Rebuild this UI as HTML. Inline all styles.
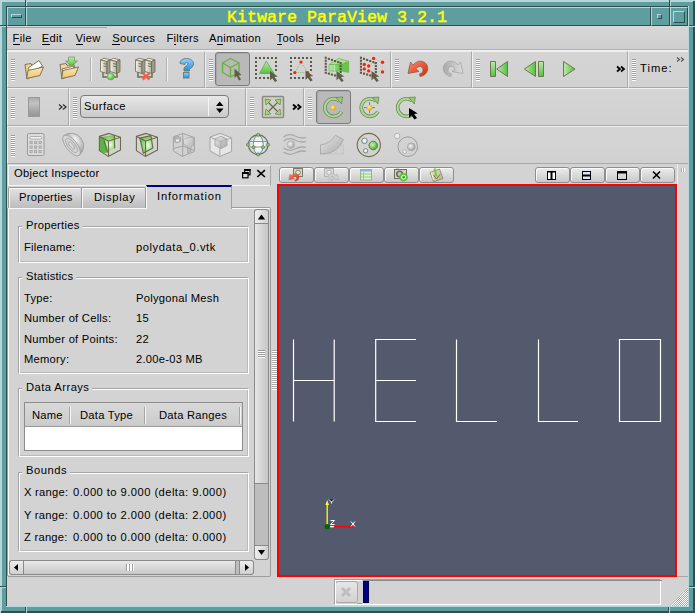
<!DOCTYPE html>
<html><head><meta charset="utf-8">
<style>
*{box-sizing:border-box}
html,body{margin:0;padding:0}
body{width:695px;height:613px;position:relative;overflow:hidden;background:#5f9ea0;font-family:"Liberation Sans",sans-serif;font-size:11.2px;letter-spacing:0.25px;color:#000}
.a{position:absolute}
.t{position:absolute;white-space:pre;line-height:1}
.lt{background:#b7d6d7}
.dk{background:#2f4f4f}
.tl{background:#5f9ea0}
u{text-decoration:none;border-bottom:1px solid #000;}
</style></head><body>
<!-- window frame -->
<div class="a lt" style="left:0;top:0;width:695px;height:2px"></div>
<div class="a lt" style="left:0;top:0;width:2px;height:613px"></div>
<div class="a dk" style="left:693px;top:1px;width:2px;height:612px"></div>
<div class="a dk" style="left:1px;top:611px;width:694px;height:2px"></div>
<!-- inner sunken bevel -->
<div class="a dk" style="left:6px;top:6px;width:683px;height:1px"></div>
<div class="a dk" style="left:6px;top:6px;width:1px;height:601px"></div>
<div class="a lt" style="left:688px;top:6px;width:1px;height:601px"></div>
<div class="a lt" style="left:6px;top:606px;width:683px;height:1px"></div>
<!-- corner breaks -->
<div class="a dk" style="left:25px;top:0;width:1px;height:6px"></div>
<div class="a lt" style="left:26px;top:0;width:1px;height:6px"></div>
<div class="a dk" style="left:669px;top:0;width:1px;height:6px"></div>
<div class="a lt" style="left:670px;top:0;width:1px;height:6px"></div>
<div class="a dk" style="left:0;top:25px;width:6px;height:1px"></div>
<div class="a lt" style="left:0;top:26px;width:6px;height:1px"></div>
<div class="a dk" style="left:689px;top:25px;width:6px;height:1px"></div>
<div class="a lt" style="left:689px;top:26px;width:6px;height:1px"></div>
<div class="a dk" style="left:0;top:586px;width:6px;height:1px"></div>
<div class="a lt" style="left:0;top:587px;width:6px;height:1px"></div>
<div class="a dk" style="left:689px;top:586px;width:6px;height:1px"></div>
<div class="a lt" style="left:689px;top:587px;width:6px;height:1px"></div>
<div class="a dk" style="left:25px;top:607px;width:1px;height:6px"></div>
<div class="a lt" style="left:26px;top:607px;width:1px;height:6px"></div>
<div class="a dk" style="left:668px;top:607px;width:1px;height:6px"></div>
<div class="a lt" style="left:669px;top:607px;width:1px;height:6px"></div>
<!-- title bar -->
<div class="a" style="left:7px;top:7px;width:19px;height:19px;border-top:1px solid #b7d6d7;border-left:1px solid #b7d6d7;border-bottom:1px solid #2f4f4f;border-right:1px solid #2f4f4f"></div>
<div class="a" style="left:11px;top:14px;width:11px;height:4px;border-top:1px solid #b7d6d7;border-left:1px solid #b7d6d7;border-bottom:1px solid #2f4f4f;border-right:1px solid #2f4f4f"></div>
<div class="a" style="left:26px;top:7px;width:625px;height:19px;border-top:1px solid #b7d6d7;border-left:1px solid #b7d6d7;border-bottom:1px solid #2f4f4f;border-right:1px solid #2f4f4f"></div>
<div class="a" style="left:651px;top:7px;width:19px;height:19px;border-top:1px solid #b7d6d7;border-left:1px solid #b7d6d7;border-bottom:1px solid #2f4f4f;border-right:1px solid #2f4f4f"></div>
<div class="a" style="left:657px;top:14px;width:5px;height:5px;border-top:1px solid #b7d6d7;border-left:1px solid #b7d6d7;border-bottom:1px solid #2f4f4f;border-right:1px solid #2f4f4f"></div>
<div class="a" style="left:670px;top:7px;width:18px;height:19px;border-top:1px solid #b7d6d7;border-left:1px solid #b7d6d7;border-bottom:1px solid #2f4f4f;border-right:1px solid #2f4f4f"></div>
<div class="a" style="left:673px;top:11px;width:12px;height:12px;border-top:1px solid #b7d6d7;border-left:1px solid #b7d6d7;border-bottom:1px solid #2f4f4f;border-right:1px solid #2f4f4f"></div>
<div class="t" style="left:227px;top:10px;letter-spacing:0;font-family:'Liberation Mono',monospace;font-weight:normal;-webkit-text-stroke:0.45px #ffff00;font-size:16.67px;color:#ffff00">Kitware ParaView 3.2.1</div>

<!-- client area -->
<div class="a" id="client" style="left:7px;top:26px;width:681px;height:580px;background:#d3d3d3"></div>

<!-- menu bar -->
<div class="a" style="left:7px;top:26px;width:681px;height:24px;background:linear-gradient(#d8d8d8,#cdcdcd)"></div>
<div class="a" style="left:7px;top:27px;width:100px;height:1px;background:#a4a4a4"></div>
<div class="a" style="left:7px;top:49px;width:681px;height:1px;background:#b4b4b4"></div>
<div class="a" style="left:7px;top:50px;width:681px;height:1px;background:#eeeeee"></div>
<div class="t" style="left:12.6px;top:33px"><u>F</u>ile</div>
<div class="t" style="left:41.8px;top:33px"><u>E</u>dit</div>
<div class="t" style="left:75.5px;top:33px"><u>V</u>iew</div>
<div class="t" style="left:112.2px;top:33px"><u>S</u>ources</div>
<div class="t" style="left:166.5px;top:33px">F<u>i</u>lters</div>
<div class="t" style="left:209px;top:33px">A<u>n</u>imation</div>
<div class="t" style="left:276.6px;top:33px"><u>T</u>ools</div>
<div class="t" style="left:316.1px;top:33px"><u>H</u>elp</div>

<!-- toolbars -->
<style>
.tb{position:absolute;border-top:1px solid #efefef;border-left:1px solid #efefef;border-right:1px solid #a9a9a9;border-bottom:1px solid #a9a9a9;background:linear-gradient(#d5d5d5,#d1d1d1)}
.grip{position:absolute;width:4px;height:22px;background:repeating-linear-gradient(#9c9c9c 0 1px,#ffffff 1px 2px)}
.sep{position:absolute;width:2px;height:24px;border-left:1px solid #b4b4b4;border-right:1px solid #f0f0f0}
.pressed{position:absolute;border:1px solid #7c7c7c;border-radius:3px;background:#b9b9b9;box-shadow:inset 1px 1px 0 #a8a8a8}
</style>
<!-- row 1 -->
<div class="tb" style="left:7px;top:51px;width:198px;height:37px"></div>
<div class="tb" style="left:205px;top:51px;width:186px;height:37px"></div>
<div class="tb" style="left:391px;top:51px;width:81px;height:37px"></div>
<div class="tb" style="left:472px;top:51px;width:156px;height:37px"></div>
<div class="tb" style="left:628px;top:51px;width:60px;height:37px;border-right:none"></div>
<div class="grip" style="left:11px;top:59px"></div>
<div class="sep" style="left:90px;top:57px"></div>
<div class="sep" style="left:166px;top:57px"></div>
<div class="grip" style="left:209px;top:59px"></div>
<div class="pressed" style="left:215px;top:52px;width:35px;height:34px"></div>
<div class="grip" style="left:395px;top:59px"></div>
<div class="grip" style="left:476px;top:59px"></div>
<div class="grip" style="left:632px;top:59px"></div>
<div class="t" style="left:640px;top:63px;letter-spacing:1px">Time:</div>
<!-- row 2 -->
<div class="tb" style="left:7px;top:88px;width:62px;height:38px"></div>
<div class="tb" style="left:69px;top:88px;width:177px;height:38px"></div>
<div class="tb" style="left:246px;top:88px;width:58px;height:38px"></div>
<div class="tb" style="left:304px;top:88px;width:384px;height:38px;border-right:none"></div>
<div class="grip" style="left:11px;top:97px"></div>
<div class="grip" style="left:73px;top:97px"></div>
<div class="grip" style="left:250px;top:97px"></div>
<div class="grip" style="left:308px;top:97px"></div>
<div class="a" style="left:28px;top:97px;width:12px;height:20px;border:1px solid #9a9a9a;background:linear-gradient(#acacac,#c2c2c2 30%,#a6a6a6 70%,#979797)"></div>
<div class="a" style="left:80px;top:95px;width:149px;height:23px;border:1px solid #7a7a7a;border-radius:4px;background:linear-gradient(#e8e8e8,#cacaca)"></div>
<div class="a" style="left:208px;top:97px;width:1px;height:19px;background:#f4f4f4"></div>
<div class="t" style="left:84px;top:101px;letter-spacing:0.5px">Surface</div>
<div class="pressed" style="left:316px;top:90px;width:35px;height:34px"></div>
<!-- row 3 -->
<div class="tb" style="left:7px;top:126px;width:681px;height:38px;border-right:none"></div>
<div class="grip" style="left:11px;top:135px"></div>

<!-- object inspector dock -->
<div class="a" style="left:8px;top:165px;width:263px;height:21px;border-top:1px solid #f4f4f4;border-left:1px solid #f4f4f4;border-right:1px solid #a4a4a4;border-bottom:1px solid #f4f4f4;background:#d5d5d5"></div>
<div class="t" style="left:14px;top:168px">Object Inspector</div>
<!-- tabs -->
<style>
.tab{position:absolute;top:187px;height:21px;border:1px solid #9a9a9a;border-bottom:none;border-radius:2px 2px 0 0;background:linear-gradient(#e2e2e2,#bdbdbd);box-shadow:inset 1px 1px 0 #f6f6f6}
</style>
<div class="a" style="left:7px;top:207px;width:264px;height:370px;border:1px solid #9c9c9c;border-radius:2px"></div>
<div class="a" style="left:8px;top:208px;width:262px;height:1px;background:#f8f8f8"></div>
<div class="a" style="left:8px;top:208px;width:1px;height:367px;background:#f8f8f8"></div>
<div class="tab" style="left:8px;width:74px"></div>
<div class="tab" style="left:81px;width:65px"></div>
<div class="a" style="left:146px;top:185px;width:86px;height:24px;border-left:1px solid #f8f8f8;border-right:1px solid #a0a0a0;background:#d3d3d3;border-top:2px solid #000080"></div>
<div class="t" style="left:19px;top:192px">Properties</div>
<div class="t" style="left:94px;top:192px;letter-spacing:0.7px">Display</div>
<div class="t" style="left:157px;top:191px;letter-spacing:0.8px">Information</div>
<!-- inner scroll area frame -->


<style>
.gb{position:absolute;border-top:1px solid #a4a4a4;border-left:1px solid #a4a4a4;border-right:1px solid #ffffff;border-bottom:1px solid #ffffff;box-shadow:inset 1px 1px 0 #ffffff,inset -1px -1px 0 #bababa}
.gt{position:absolute;white-space:pre;line-height:1;background:#d3d3d3;padding:0 3px 0 4px}
</style>
<!-- group boxes -->
<div class="gb" style="left:18px;top:226px;width:231px;height:37px"></div>
<div class="gt" style="left:22px;top:220px">Properties</div>
<div class="t" style="left:24px;top:242px">Filename:</div>
<div class="t" style="left:136px;top:242px;letter-spacing:0.55px">polydata_0.vtk</div>

<div class="gb" style="left:18px;top:277px;width:231px;height:97px"></div>
<div class="gt" style="left:22px;top:271px">Statistics</div>
<div class="t" style="left:24px;top:293px">Type:</div>
<div class="t" style="left:136px;top:293px">Polygonal Mesh</div>
<div class="t" style="left:24px;top:313px">Number of Cells:</div>
<div class="t" style="left:136px;top:313px">15</div>
<div class="t" style="left:24px;top:334px">Number of Points:</div>
<div class="t" style="left:136px;top:334px">22</div>
<div class="t" style="left:24px;top:354px">Memory:</div>
<div class="t" style="left:136px;top:354px">2.00e-03 MB</div>

<div class="gb" style="left:18px;top:388px;width:231px;height:69px"></div>
<div class="gt" style="left:22px;top:382px;letter-spacing:0.45px">Data Arrays</div>
<div class="a" style="left:24px;top:402px;width:219px;height:49px;border:1px solid #8c8c8c;background:#fff"></div>
<div class="a" style="left:25px;top:403px;width:217px;height:24px;background:linear-gradient(#d9d9d9,#cbcbcb);border-bottom:1px solid #9a9a9a"></div>
<div class="a" style="left:69px;top:407px;width:2px;height:17px;border-left:1px solid #a6a6a6;border-right:1px solid #f5f5f5"></div>
<div class="a" style="left:144px;top:407px;width:2px;height:17px;border-left:1px solid #a6a6a6;border-right:1px solid #f5f5f5"></div>
<div class="a" style="left:239px;top:407px;width:2px;height:17px;border-left:1px solid #a6a6a6;border-right:1px solid #f5f5f5"></div>
<div class="t" style="left:32px;top:410px">Name</div>
<div class="t" style="left:80px;top:410px">Data Type</div>
<div class="t" style="left:159px;top:410px">Data Ranges</div>

<div class="gb" style="left:18px;top:472px;width:231px;height:80px"></div>
<div class="gt" style="left:22px;top:465px;letter-spacing:0.55px">Bounds</div>
<div class="t" style="left:24px;top:487px">X range:</div>
<div class="t" style="left:73px;top:487px;letter-spacing:0.45px">0.000 to 9.000 (delta: 9.000)</div>
<div class="t" style="left:24px;top:510px">Y range:</div>
<div class="t" style="left:73px;top:510px;letter-spacing:0.45px">0.000 to 2.000 (delta: 2.000)</div>
<div class="t" style="left:24px;top:532px">Z range:</div>
<div class="t" style="left:73px;top:532px;letter-spacing:0.45px">0.000 to 0.000 (delta: 0.000)</div>

<!-- vertical scrollbar -->
<div class="a" style="left:254px;top:209px;width:15px;height:351px;border:1px solid #8a8a8a;border-radius:3px;background:#bdbdbd"></div>
<div class="a" style="left:254px;top:209px;width:15px;height:15px;border:1px solid #8a8a8a;border-radius:3px 3px 0 0;background:linear-gradient(90deg,#eeeeee,#d0d0d0)"></div>
<div class="a" style="left:254px;top:223px;width:15px;height:261px;border:1px solid #8a8a8a;background:linear-gradient(90deg,#e6e6e6,#c6c6c6)"></div>
<div class="a" style="left:254px;top:545px;width:15px;height:15px;border:1px solid #8a8a8a;border-radius:0 0 3px 3px;background:linear-gradient(90deg,#eeeeee,#d0d0d0)"></div>
<div class="a" style="left:258px;top:350px;width:7px;height:8px;background:repeating-linear-gradient(#9a9a9a 0 1px,#ffffff 1px 2px)"></div>
<!-- horizontal scrollbar -->
<div class="a" style="left:9px;top:560px;width:245px;height:15px;border:1px solid #8a8a8a;border-radius:3px;background:linear-gradient(#e8e8e8,#c8c8c8)"></div>
<div class="a" style="left:9px;top:560px;width:15px;height:15px;border:1px solid #8a8a8a;border-radius:3px 0 0 3px;background:linear-gradient(#eeeeee,#d0d0d0)"></div>
<div class="a" style="left:235px;top:561px;width:5px;height:13px;background:#bdbdbd;border-left:1px solid #8a8a8a"></div>
<div class="a" style="left:239px;top:560px;width:15px;height:15px;border:1px solid #8a8a8a;border-radius:0 3px 3px 0;background:linear-gradient(#eeeeee,#d0d0d0)"></div>
<div class="a" style="left:126px;top:564px;width:8px;height:7px;background:repeating-linear-gradient(90deg,#9a9a9a 0 1px,#ffffff 1px 3px)"></div>

<!-- dock title buttons -->
<svg class="a" style="left:0;top:0" width="695" height="200" viewBox="0 0 695 200">
<rect x="244.6" y="169.6" width="5.4" height="5.2" fill="none" stroke="#000" stroke-width="1.2"/>
<path d="M244 170h6.6" stroke="#000" stroke-width="2"/>
<rect x="242.6" y="172.6" width="5.4" height="5.2" fill="#dcdcdc" stroke="#000" stroke-width="1.2"/>
<path d="M242 173h6.6" stroke="#000" stroke-width="2"/>
<path d="M257.3 170.2l7.6 6.8 M264.9 170.2l-7.6 6.8" stroke="#000" stroke-width="1.6"/>
</svg>
<!-- view header -->
<style>
.vb{position:absolute;top:167px;height:16px;border:1px solid #8e8e8e;border-radius:3px;background:linear-gradient(#ececec,#c9c9c9);box-shadow:inset 1px 1px 0 #fafafa}
</style>

<div class="vb" style="left:279px;width:35px"></div>
<div class="vb" style="left:314px;width:35px"></div>
<div class="vb" style="left:349px;width:35px"></div>
<div class="vb" style="left:384px;width:35px"></div>
<div class="vb" style="left:419px;width:35px"></div>
<div class="vb" style="left:535px;width:35px"></div>
<div class="vb" style="left:570px;width:35px"></div>
<div class="vb" style="left:605px;width:35px"></div>
<div class="vb" style="left:640px;width:35px"></div>
<svg class="a" style="left:535px;top:167px" width="140" height="16" viewBox="0 0 140 16">
<rect x="12.5" y="4.5" width="8" height="8" fill="#fff" stroke="#000" stroke-width="1"/>
<path d="M16.5 4v9" stroke="#000" stroke-width="2"/>
<path d="M13 5h7" stroke="#000" stroke-width="1"/>
<rect x="47.5" y="4.5" width="8" height="8" fill="#dde6f4" stroke="#000" stroke-width="1"/>
<path d="M47 8.5h9" stroke="#000" stroke-width="2"/>
<rect x="82.5" y="4.5" width="9" height="8" fill="none" stroke="#000" stroke-width="1"/>
<path d="M82 5.5h10" stroke="#000" stroke-width="2"/>
<path d="M118 4.5l7 7 M125 4.5l-7 7" stroke="#000" stroke-width="1.6"/>
</svg>
<!-- splitter grips -->
<div class="a" style="left:272px;top:350px;width:5px;height:40px;background:repeating-linear-gradient(#a8a8a8 0 1px,#ffffff 1px 2px)"></div>
<div class="a" style="left:681px;top:168px;width:4px;height:4px;background:repeating-linear-gradient(90deg,#a8a8a8 0 1px,#ffffff 1px 2px)"></div>
<!-- 3d view -->
<div class="a" style="left:277px;top:184px;width:400px;height:393px;border:2px solid #ff0000;background:#545a6e"></div>
<div class="a" style="left:677px;top:164px;width:1px;height:412px;background:#efefef"></div>
<div class="a" style="left:677px;top:576px;width:11px;height:1px;background:#a8a8a8"></div>
<svg class="a" style="left:0;top:0" width="695" height="613" viewBox="0 0 695 613">
<g stroke="#ffffff" stroke-width="1.2" fill="none">
<path d="M293.5 339.5V421.5 M334.2 339.5V421.5 M293.5 380.5H334.2"/>
<path d="M416 339.5H375.7V421.5H416 M375.7 380.5H416"/>
<path d="M456.5 339.5V421.5H497"/>
<path d="M538.5 339.5V421.5H578"/>
<path d="M619.5 339.5H660.5V421.5H619.5Z"/>
</g>
<g>
<path d="M327.2 526.5V503" stroke="#ffff00" stroke-width="1.3"/>
<path d="M325.4 505L327.2 500L329 505Z" fill="#ffff00"/>
<path d="M330 526.7H349" stroke="#ff0000" stroke-width="1.3"/>
<path d="M330 526.7H334" stroke="#ffffff" stroke-width="1.3"/>
<path d="M349 525L354 526.7L349 528.4Z" fill="#ff0000"/>
<circle cx="327.2" cy="526.7" r="2.6" fill="#006400"/>
<path d="M329 499.5l2.5 2.5l2.5-2.5 M331.5 502v1.5" stroke="#fff" stroke-width="1"/>
<path d="M330.5 520.5h4l-4 4h4" stroke="#fff" stroke-width="1" fill="none"/>
<path d="M351 521.5l4 5 M355 521.5l-4 5" stroke="#fff" stroke-width="1"/>
</g>
</svg>
<!-- status bar -->
<div class="a" style="left:334px;top:579px;width:327px;height:26px;border-top:1px solid #a0a0a0;border-left:1px solid #a0a0a0;border-right:1px solid #ffffff;border-bottom:1px solid #ffffff"></div>
<div class="a" style="left:335px;top:581px;width:23px;height:22px;border:1px solid #a9a9a9;border-radius:3px;background:linear-gradient(#e6e6e6,#d2d2d2)"></div>
<svg class="a" style="left:335px;top:581px" width="23" height="22" viewBox="0 0 23 22">
<path d="M7 7l8 8 M15 7l-8 8" stroke="#bdbdbd" stroke-width="3"/>
</svg>
<div class="a" style="left:335px;top:580px;width:27px;height:1px;background:#ffffff"></div>
<div class="a" style="left:335px;top:580px;width:1px;height:24px;background:#ffffff"></div>
<div class="a" style="left:357px;top:603px;width:5px;height:1px;background:#9a9a9a"></div>
<div class="a" style="left:363px;top:580px;width:1px;height:24px;background:#f4f4f4"></div>
<div class="a" style="left:336px;top:580px;width:326px;height:1px;background:#8c8c8c;clip-path:inset(0 0 0 27px)"></div>
<div class="a" style="left:363px;top:581px;width:6px;height:22px;background:#000080;border:1px solid #000050"></div>
<svg class="a" style="left:670px;top:588px" width="18" height="18" viewBox="0 0 18 18">
<defs><pattern id="chk" width="2" height="2" patternUnits="userSpaceOnUse"><rect width="2" height="2" fill="#a8a8a8"/><rect width="1" height="1" fill="#ffffff"/><rect x="1" y="1" width="1" height="1" fill="#ffffff"/></pattern></defs>
<path d="M18 0V18H0Z" fill="url(#chk)"/>
</svg>
<!-- ICONS -->
<svg class="a" style="left:0;top:0;pointer-events:none" width="695" height="613" viewBox="0 0 695 613">
<defs>
<linearGradient id="gf" x1="0" y1="0" x2="0" y2="1"><stop offset="0" stop-color="#fbe7b5"/><stop offset="1" stop-color="#f0c56a"/></linearGradient>
<linearGradient id="gg" x1="0" y1="0" x2="0" y2="1"><stop offset="0" stop-color="#b8eca8"/><stop offset="1" stop-color="#58c040"/></linearGradient>
<linearGradient id="gg2" x1="0" y1="0" x2="1" y2="0"><stop offset="0" stop-color="#b8eca8"/><stop offset="1" stop-color="#58c040"/></linearGradient>
<linearGradient id="gs" x1="0" y1="0" x2="1" y2="0"><stop offset="0" stop-color="#f4f4ee"/><stop offset="1" stop-color="#b4b4a8"/></linearGradient>
<linearGradient id="gq" x1="0" y1="0" x2="0" y2="1"><stop offset="0" stop-color="#8fd3ff"/><stop offset="1" stop-color="#1a8fe8"/></linearGradient>
<linearGradient id="gr" x1="0" y1="0" x2="1" y2="1"><stop offset="0" stop-color="#ff8a70"/><stop offset="1" stop-color="#e02000"/></linearGradient>
<linearGradient id="ggr" x1="0" y1="0" x2="1" y2="1"><stop offset="0" stop-color="#e8e8e8"/><stop offset="1" stop-color="#a8a8a8"/></linearGradient>
<linearGradient id="gredo" x1="0" y1="0" x2="1" y2="0"><stop offset="0" stop-color="#a8a8a8"/><stop offset="1" stop-color="#dedede"/></linearGradient>
<radialGradient id="rgg" cx="0.4" cy="0.4" r="0.6"><stop offset="0" stop-color="#c8f5b8"/><stop offset="1" stop-color="#48b030"/></radialGradient>
<radialGradient id="rgy" cx="0.4" cy="0.4" r="0.6"><stop offset="0" stop-color="#fff080"/><stop offset="1" stop-color="#f0a800"/></radialGradient>
<radialGradient id="rgb" cx="0.5" cy="0.45" r="0.6"><stop offset="0" stop-color="#ffffff"/><stop offset="1" stop-color="#a8cce8"/></radialGradient>
<radialGradient id="rggr" cx="0.4" cy="0.4" r="0.6"><stop offset="0" stop-color="#f4f4f4"/><stop offset="1" stop-color="#a0a0a0"/></radialGradient>
</defs>
<!-- ===== row 1 ===== -->
<!-- open folder -->
<g stroke="#6e6a50" stroke-width="0.9" stroke-linejoin="round">
<path d="M25 64.5L31 63.5L32 65.5L37 64.5L38 72L27 79Z" fill="#f5d592"/>
<path d="M28 68L39 60.5L42.5 66L31 73Z" fill="#ffffff"/>
<path d="M26.5 78.5L28 70.5L43.5 67L40 75.5Z" fill="url(#gf)"/>
</g>
<!-- open folder + arrow -->
<g stroke="#6e6a50" stroke-width="0.9" stroke-linejoin="round">
<path d="M60 64.5L66 63.5L67 65.5L74 64.5L75 72L62 79Z" fill="#f5d592"/>
<path d="M62 69L74 66L73 72L64 75Z" fill="#ffffff"/>
<path d="M61.5 78.5L63 70.5L78.5 67L75 75.5Z" fill="url(#gf)"/>
</g>
<path d="M68.5 57H74.5V61H77.5L71.5 66L65.5 61H68.5Z" fill="url(#gg)" stroke="#5a8a40" stroke-width="0.6"/>
<!-- server connect -->
<g transform="translate(0 0)">
<path d="M103 71.5V77H117V71.5" fill="none" stroke="#707058" stroke-width="1.5"/>
<g stroke="#6e6a50" stroke-width="0.8" stroke-linejoin="round">
<path d="M100.5 60L104 58.3L110.5 59.8L107 61.5Z" fill="#f2f2ea"/>
<path d="M100.5 60L107 61.5V73.5L100.5 71.5Z" fill="url(#gs)"/>
<path d="M107 61.5L110.5 59.8V71.8L107 73.5Z" fill="#9c9c88"/>
<path d="M110 60L113.5 58.3L120 59.8L116.5 61.5Z" fill="#f2f2ea"/>
<path d="M110 60L116.5 61.5V73.5L110 71.5Z" fill="url(#gs)"/>
<path d="M116.5 61.5L120 59.8V71.8L116.5 73.5Z" fill="#9c9c88"/>
</g>
<path d="M103.5 63.5l3 .7 M103.5 66l3 .7 M113 63.5l3 .7 M113 66l3 .7" stroke="#6e6a50" stroke-width="0.9"/>
</g>
<circle cx="110.7" cy="76.5" r="3.5" fill="url(#rgg)" stroke="#78a060" stroke-width="0.6"/>
<g transform="translate(35 0)">
<path d="M103 71.5V77H117V71.5" fill="none" stroke="#707058" stroke-width="1.5"/>
<g stroke="#6e6a50" stroke-width="0.8" stroke-linejoin="round">
<path d="M100.5 60L104 58.3L110.5 59.8L107 61.5Z" fill="#f2f2ea"/>
<path d="M100.5 60L107 61.5V73.5L100.5 71.5Z" fill="url(#gs)"/>
<path d="M107 61.5L110.5 59.8V71.8L107 73.5Z" fill="#9c9c88"/>
<path d="M110 60L113.5 58.3L120 59.8L116.5 61.5Z" fill="#f2f2ea"/>
<path d="M110 60L116.5 61.5V73.5L110 71.5Z" fill="url(#gs)"/>
<path d="M116.5 61.5L120 59.8V71.8L116.5 73.5Z" fill="#9c9c88"/>
</g>
<path d="M103.5 63.5l3 .7 M103.5 66l3 .7 M113 63.5l3 .7 M113 66l3 .7" stroke="#6e6a50" stroke-width="0.9"/>
</g>
<path d="M142.8 73l6.6 6.6 M149.4 73l-6.6 6.6" stroke="#ff5a3c" stroke-width="2.2"/>
<!-- help ? -->
<path d="M180 63.5C180 60 183 58.5 186.5 58.5C190.5 58.5 193.5 60.5 193.5 64C193.5 67 190.5 68 189.5 69.5V71H184V68.5C184 66.5 188 65.5 188 64C188 63 187.5 62.5 186.5 62.5C185.5 62.5 185 63.5 185 64.5Z" fill="url(#gq)" stroke="#7a7460" stroke-width="0.9"/>
<rect x="183.5" y="72.5" width="5.5" height="5.5" fill="url(#gq)" stroke="#7a7460" stroke-width="0.9"/>
<!-- cube select (pressed) -->
<g fill="none" stroke="#6cb040" stroke-width="1.4" stroke-linejoin="round">
<path d="M230.5 58.5L239 63V72.5L230.5 77L222.5 72.5V63Z"/>
<path d="M222.5 63L230.5 67.5L239 63 M230.5 67.5V77"/>
</g>
<path d="M234.5 68.5V78L236.5 76L239 80.5L241 79.5L238.5 75.5L241.5 75Z" fill="#5e5e48"/>
<!-- select cells -->
<g fill="#5a5a46">
<path d="M255 57h2v2h-2z M259 57h2v2h-2z M263 57h2v2h-2z M267 57h2v2h-2z M271 57h2v2h-2z M275 57h2v2h-2z
M255 61h2v2h-2z M255 65h2v2h-2z M255 69h2v2h-2z M255 73h2v2h-2z M255 77h2v2h-2z
M275 61h2v2h-2z M275 65h2v2h-2z M275 69h2v2h-2z
M259 77h2v2h-2z M263 77h2v2h-2z M267 77h2v2h-2z"/>
</g>
<path d="M266.3 61L274 73.5H259.5Z" fill="url(#gg)" stroke="#58a040" stroke-width="0.7"/>
<path d="M270 71V80.5L272.2 78.3L275 82L277.2 80.8L274.5 77L277.8 76.5Z" fill="#5e5e48"/>
<!-- select points -->
<g fill="#5a5a46">
<path d="M290 57h2v2h-2z M294 57h2v2h-2z M298 57h2v2h-2z M302 57h2v2h-2z M306 57h2v2h-2z M310 57h2v2h-2z
M290 61h2v2h-2z M290 65h2v2h-2z M290 69h2v2h-2z M290 73h2v2h-2z M290 77h2v2h-2z
M310 61h2v2h-2z M310 65h2v2h-2z M310 69h2v2h-2z
M294 77h2v2h-2z M298 77h2v2h-2z M302 77h2v2h-2z"/>
</g>
<path d="M301 62L294.8 72.6H307.6Z" fill="none" stroke="#7cc060" stroke-width="0.8" stroke-dasharray="1.5 1"/>
<circle cx="301" cy="62" r="1.6" fill="#ff2000"/><circle cx="294.8" cy="72.6" r="1.6" fill="#ff2000"/><circle cx="307.6" cy="72.6" r="1.6" fill="#ff2000"/>
<path d="M305.5 70.5V80L307.7 77.8L310.5 81.5L312.7 80.3L310 76.5L313.3 76Z" fill="#5e5e48"/>
<!-- frustum cells -->
<path d="M329.1 64.5L338.6 58.4L348.7 61.3L341.6 64.8Z" fill="#a8e090" stroke="#5cb040" stroke-width="0.6"/>
<path d="M341.6 64.8L348.7 61.3V72.4L341.6 71Z" fill="#6cc450" stroke="#5cb040" stroke-width="0.6"/>
<path d="M329.1 64.5H341.6V71H329.1Z" fill="url(#gg2)" stroke="#5cb040" stroke-width="0.6"/>
<path d="M334.5 64.5V71" stroke="#c8f0b8" stroke-width="0.8"/>
<g fill="#5a5a46"><rect x="324.7" y="56.7" width="2.1" height="2.1"/><rect x="324.7" y="59.7" width="2.1" height="2.1"/><rect x="324.7" y="62.7" width="2.1" height="2.1"/><rect x="324.7" y="65.7" width="2.1" height="2.1"/><rect x="324.7" y="68.7" width="2.1" height="2.1"/><rect x="324.7" y="71.7" width="2.1" height="2.1"/><rect x="327.8" y="57.8" width="2.1" height="2.1"/><rect x="330.9" y="58.9" width="2.1" height="2.1"/><rect x="334.0" y="60.0" width="2.1" height="2.1"/><rect x="337.1" y="61.1" width="2.1" height="2.1"/><rect x="339.6" y="62.0" width="2.1" height="2.1"/><rect x="339.6" y="65.0" width="2.1" height="2.1"/><rect x="339.6" y="68.0" width="2.1" height="2.1"/><rect x="339.6" y="71.0" width="2.1" height="2.1"/><rect x="327.8" y="72.6" width="2.1" height="2.1"/><rect x="330.9" y="73.5" width="2.1" height="2.1"/><rect x="334.0" y="74.4" width="2.1" height="2.1"/></g>
<path d="M336.5 71V80.5L338.7 78.3L341.5 82L343.7 80.8L341 77L344.3 76.5Z" fill="#5e5e48"/>
<!-- frustum points -->
<path d="M373.6 58.4L382.5 62.3V71.9 M368.7 66L375.6 63" fill="none" stroke="#b8b8b0" stroke-width="0.8" stroke-dasharray="1.2 1.5"/>
<g fill="#5a5a46"><rect x="359.9" y="56.7" width="2.1" height="2.1"/><rect x="359.9" y="59.7" width="2.1" height="2.1"/><rect x="359.9" y="62.7" width="2.1" height="2.1"/><rect x="359.9" y="65.7" width="2.1" height="2.1"/><rect x="359.9" y="68.7" width="2.1" height="2.1"/><rect x="359.9" y="71.7" width="2.1" height="2.1"/><rect x="363.0" y="57.8" width="2.1" height="2.1"/><rect x="366.1" y="58.9" width="2.1" height="2.1"/><rect x="369.2" y="60.0" width="2.1" height="2.1"/><rect x="372.3" y="61.1" width="2.1" height="2.1"/><rect x="374.8" y="62.0" width="2.1" height="2.1"/><rect x="374.8" y="65.0" width="2.1" height="2.1"/><rect x="374.8" y="68.0" width="2.1" height="2.1"/><rect x="374.8" y="71.0" width="2.1" height="2.1"/><rect x="363.0" y="72.6" width="2.1" height="2.1"/><rect x="366.1" y="73.5" width="2.1" height="2.1"/><rect x="369.2" y="74.4" width="2.1" height="2.1"/></g>
<g fill="#ff2000">
<circle cx="364.3" cy="64.5" r="1.7"/><circle cx="368.7" cy="66" r="1.7"/><circle cx="364.3" cy="68.9" r="1.7"/><circle cx="368.7" cy="70.9" r="1.7"/><circle cx="373.6" cy="58.4" r="1.7"/><circle cx="382.5" cy="62.3" r="1.7"/><circle cx="382.5" cy="71.9" r="1.7"/>
</g>
<path d="M371.5 71V80.5L373.7 78.3L376.5 82L378.7 80.8L376 77L379.3 76.5Z" fill="#5e5e48"/>
<!-- undo -->
<path d="M408 73.5L410.5 62L413 65C416 61.5 419.5 60.5 422.5 61.5C427 63 428.5 67 427.5 70.5C426.5 74 423.5 76 420 76.5L419.5 74C422 73.5 423 72 423 70C423 67.5 421 66 419 66.5C417.5 67 416.5 68 416 69L419 71.5Z" fill="url(#gr)" stroke="#7a6a50" stroke-width="0.8"/>
<!-- redo gray -->
<path d="M463 73.5L460.5 62L458 65C455 61.5 451.5 60.5 448.5 61.5C444 63 442.5 67 443.5 70.5C444.5 74 447.5 76 451 76.5L451.5 74C449 73.5 448 72 448 70C448 67.5 450 66 452 66.5C453.5 67 454.5 68 455 69L452 71.5Z" fill="url(#gredo)" stroke="#a4a4a4" stroke-width="0.8"/>
<!-- first frame -->
<g stroke="#6b6b4a" stroke-width="0.9" stroke-linejoin="round">
<rect x="490.5" y="61.5" width="5" height="15" fill="url(#gg)"/>
<path d="M496.7 69L507.5 61.5V76.5Z" fill="url(#gg2)"/>
<path d="M524.3 69L535.5 61.5V76.5Z" fill="url(#gg2)"/>
<rect x="538.5" y="61.5" width="5" height="15" fill="url(#gg)"/>
<path d="M563.5 61.5L575 69L563.5 76.5Z" fill="url(#gg2)"/>
</g>
<!-- extension marks -->
<path d="M617 66.5l3 2.5l-3 2.5 M621 66.5l3 2.5l-3 2.5" fill="none" stroke="#000" stroke-width="1.7"/>
<path d="M677 57.5l2.5 2l-2.5 2 M681 57.5l2.5 2l-2.5 2" fill="none" stroke="#555" stroke-width="1.2"/>
<path d="M59 104.5l3 2.5l-3 2.5 M63 104.5l3 2.5l-3 2.5" fill="none" stroke="#333" stroke-width="1.3"/>
<path d="M293 104.5l3 2.5l-3 2.5 M297.5 104.5l3 2.5l-3 2.5" fill="none" stroke="#000" stroke-width="1.9"/>
<!-- ===== row 2 ===== -->
<!-- combo arrows -->
<path d="M216 106L219.7 101.5L223.5 106Z M216 108.5L219.7 113L223.5 108.5Z" fill="#000"/>
<!-- reset camera -->
<rect x="262.5" y="96.5" width="21" height="21" fill="#d0d0c8" stroke="#8a8a76" stroke-width="1.5" rx="1"/>
<path d="M266 100l14 14 M280 100l-14 14" stroke="#6a6a52" stroke-width="1.3"/>
<g fill="#9ad870" stroke="#6a6a52" stroke-width="0.6">
<path d="M265 99L271 100L266 105Z"/><path d="M281 99L280 105L275 100Z"/>
<path d="M265 115L266 109L271 114Z"/><path d="M281 115L275 114L280 109Z"/>
</g>
<!-- rotation center icons -->
<g fill="none" stroke-linecap="butt">
<path d="M339.5 101A8.8 8.8 0 1 0 341.5 111.5" stroke="#70845a" stroke-width="3.6"/>
<path d="M339.5 101A8.8 8.8 0 1 0 341.5 111.5" stroke="#a8dc90" stroke-width="2"/>
<path d="M375.9 101A8.8 8.8 0 1 0 377.9 111.5" stroke="#70845a" stroke-width="3.6"/>
<path d="M375.9 101A8.8 8.8 0 1 0 377.9 111.5" stroke="#a8dc90" stroke-width="2"/>
<path d="M412.3 101A8.8 8.8 0 1 0 414.3 111.5" stroke="#70845a" stroke-width="3.6"/>
<path d="M412.3 101A8.8 8.8 0 1 0 414.3 111.5" stroke="#a8dc90" stroke-width="2"/>
</g>
<g fill="#90d070" stroke="#70845a" stroke-width="0.8" stroke-linejoin="round">
<path d="M336 97.5L342.5 97L341.5 104Z"/>
<path d="M372.4 97.5L378.9 97L377.9 104Z"/>
<path d="M408.8 97.5L415.3 97L414.3 104Z"/>
</g>
<circle cx="333.2" cy="107.7" r="2.6" fill="url(#rgy)"/>
<path d="M364 107.7h11 M369.6 102v11" stroke="#6a8050" stroke-width="0.9"/>
<circle cx="369.6" cy="107.7" r="2.8" fill="url(#rgy)"/>
<path d="M409 108V118L411.5 115.5L414.5 119.5L417 118L414 114L417.8 113.5Z" fill="#000"/>
<!-- ===== row 3 ===== -->
<!-- calculator -->
<rect x="27.5" y="133.5" width="16.5" height="22" rx="1.5" fill="#dcdcdc" stroke="#9a9a9a" stroke-width="1"/>
<rect x="30" y="136.5" width="11.5" height="2.5" rx="1" fill="#f4f4f4" stroke="#a0a0a0" stroke-width="0.8"/>
<g fill="#cfcfcf" stroke="#a0a0a0" stroke-width="0.8">
<rect x="30" y="141.5" width="2.2" height="2.2"/><rect x="34.5" y="141.5" width="2.2" height="2.2"/><rect x="39" y="141.5" width="2.2" height="2.2"/>
<rect x="30" y="146" width="2.2" height="2.2"/><rect x="34.5" y="146" width="2.2" height="2.2"/><rect x="39" y="146" width="2.2" height="2.2"/>
<rect x="30" y="150.5" width="2.2" height="2.2"/><rect x="34.5" y="150.5" width="2.2" height="2.2"/><rect x="39" y="150.5" width="2.2" height="2.2"/>
</g>
<!-- contour gray -->
<g transform="translate(71.5 145.5) rotate(52)">
<path d="M-12.5 0A12.5 12 0 0 1 12.5 0Z" fill="url(#rggr)" stroke="#a4a4a4" stroke-width="0.9"/>
<ellipse cx="0" cy="0" rx="12.5" ry="5.5" fill="#d6d6d6" stroke="#a4a4a4" stroke-width="0.9"/>
<ellipse cx="0" cy="0" rx="8.5" ry="3.6" fill="none" stroke="#a8a8a8" stroke-width="0.9"/>
<ellipse cx="0" cy="0" rx="4.5" ry="1.8" fill="none" stroke="#a8a8a8" stroke-width="0.9"/>
</g>
<!-- clip -->
<radialGradient id="rgc" cx="0.62" cy="0.55" r="0.7"><stop offset="0" stop-color="#f4fff0"/><stop offset="0.45" stop-color="#9edc84"/><stop offset="1" stop-color="#4cae34"/></radialGradient>
<path d="M100 137.3L114 134.9L115.8 148.1L104 152.5Z" fill="url(#rgc)"/>
<path d="M99.5 136.5L104.5 139.5L108 152.5L104 153L99.5 150.5Z" fill="#5cb444"/>
<g fill="none" stroke="#6b6b4a" stroke-width="1.1" stroke-linejoin="round">
<path d="M109.2 133.4L120.5 137.3V150L108.2 156.4L99.4 150.6V136.4Z"/>
<path d="M99.4 136.4L108.5 141L120.5 137.3 M108.5 141V156"/>
<path d="M114.5 135V148.3 M104 140.5L107.5 152"/>
</g>
<!-- slice -->
<path d="M139.8 138L150.9 135.6L152.9 148.1L143.3 153.2Z" fill="url(#rgc)"/>
<g fill="none" stroke="#6b6b4a" stroke-width="1.1" stroke-linejoin="round">
<path d="M146.2 133.4L157.5 137.3V150L145.2 156.4L136.4 150.6V136.4Z"/>
<path d="M136.4 136.4L145.5 141L157.5 137.3 M145.5 141V156"/>
<path d="M139.8 138L150.9 135.6L152.9 148.1L143.3 153.2Z"/>
</g>
<!-- extract cells gray -->
<path d="M174 137.5L177.5 136L180.5 137.3V141.5L177 143L174 141.5Z" fill="#b4b4b4" stroke="#a0a0a0" stroke-width="0.6"/>
<path d="M176 139.5h3v2h-3z" fill="#f0f0f0"/>
<path d="M183.5 139.5L190 137L194 138.5V145L191 146.5V151.5L187.5 153V146L183.5 144.5Z" fill="url(#ggr)" stroke="#a0a0a0" stroke-width="0.6"/>
<g fill="none" stroke="#a4a4a4" stroke-width="1" stroke-linejoin="round">
<path d="M182.7 133.4L194.4 137.5V151.5L182.2 156.4L173.4 151V136.8Z"/>
<path d="M173.4 148.6L182.7 146L194.4 150.5 M182.7 133.8V156"/>
</g>
<!-- box gray -->
<path d="M220.3 133.4L231.6 137.8V151.5L219.9 156.4L210 151V137Z" fill="#e6e6e6" stroke="#a4a4a4" stroke-width="1" stroke-linejoin="round"/>
<path d="M210 137L215.5 139.5 M226 140L231.6 137.8 M219.9 147V156.4" fill="none" stroke="#a8a8a8" stroke-width="1"/>
<path d="M215 139L221 136.3L227 139V145.5L221 148.5L215 145.5Z" fill="url(#ggr)" stroke="#a0a0a0" stroke-width="0.8" stroke-linejoin="round"/>
<path d="M215 139L221 141.8L227 139 M221 141.8V148.5" fill="none" stroke="#a0a0a0" stroke-width="0.7"/>
<!-- sphere glyph -->
<radialGradient id="rgs" cx="0.5" cy="0.5" r="0.55"><stop offset="0" stop-color="#ffffff"/><stop offset="0.6" stop-color="#e4f0fa"/><stop offset="1" stop-color="#a8d0ee"/></radialGradient>
<circle cx="258.2" cy="144.7" r="9.8" fill="url(#rgs)" stroke="#6b6b4a" stroke-width="1.1"/>
<ellipse cx="258.2" cy="144.7" rx="5" ry="9.6" fill="none" stroke="#7a7a60" stroke-width="0.9"/>
<path d="M250 141.5H266.5 M250 147H266.5" stroke="#8a8a72" stroke-width="0.9"/>
<g fill="#8ccc6a" stroke="#6b6b4a" stroke-width="0.7">
<rect x="256.8" y="133.4" width="2.8" height="2.8" rx="0.8"/><rect x="246.6" y="143.3" width="2.8" height="2.8" rx="0.8"/><rect x="266.6" y="143.3" width="2.8" height="2.8" rx="0.8"/><rect x="256.8" y="153.1" width="2.8" height="2.8" rx="0.8"/><rect x="252.2" y="145.9" width="2.8" height="2.8" rx="0.8"/><rect x="261.6" y="145.9" width="2.8" height="2.8" rx="0.8"/>
</g>
<!-- stream tracer gray -->
<g fill="none" stroke="#a8a8a8" stroke-width="1.3">
<path d="M283.5 137Q289 133 295 136T306 137.5"/>
<path d="M283.5 141Q289 137 295 140T306 141.5"/>
<path d="M283.5 148Q289 152 295 149T306 147.5"/>
<path d="M283.5 152Q289 156 295 153T306 151.5"/>
</g>
<circle cx="290.9" cy="144.6" r="3.8" fill="url(#rggr)" stroke="#b0b0b0" stroke-width="0.6"/>
<!-- warp gray -->
<rect x="320.5" y="145" width="23" height="9" fill="#d0d0d0" stroke="#c4c4c4" stroke-width="0.8"/>
<path d="M320.5 145Q331 143.5 335.3 135.3L343.5 139.5Q338 153 324 153.8H320.5Z" fill="url(#ggr)" stroke="#a8a8a8" stroke-width="0.9" stroke-linejoin="round"/>
<!-- group datasets -->
<circle cx="368.8" cy="145" r="11.6" fill="none" stroke="#6b6b4a" stroke-width="1.1"/>
<circle cx="373.2" cy="145.5" r="4.3" fill="url(#rgg)" stroke="#5a6a40" stroke-width="0.8"/>
<circle cx="364.5" cy="140.8" r="2.8" fill="url(#rgb)" stroke="#6b6b4a" stroke-width="0.7"/>
<circle cx="365.6" cy="150.8" r="2.2" fill="url(#rgb)" stroke="#6b6b4a" stroke-width="0.7"/>
<!-- extract level gray -->
<circle cx="407.8" cy="146.7" r="9.8" fill="none" stroke="#9c9c9c" stroke-width="1"/>
<circle cx="397.2" cy="136" r="2.7" fill="#eeeeee" stroke="#a8a8a8" stroke-width="0.8"/>
<circle cx="411.3" cy="146.8" r="3.9" fill="url(#rggr)" stroke="#a4a4a4" stroke-width="0.7"/>
<circle cx="404.6" cy="151.6" r="1.8" fill="#eeeeee" stroke="#a4a4a4" stroke-width="0.7"/>
<!-- ===== view header icons ===== -->
<rect x="293.5" y="168.5" width="9" height="8" fill="#d4d4c4" stroke="#7a7a66" stroke-width="1"/>
<circle cx="298" cy="172.5" r="2.3" fill="#e8e8e0" stroke="#7a7a66" stroke-width="0.9"/>
<path transform="translate(288.8 173.6) scale(0.52 0.49) translate(-408 -61)" d="M408 73.5L410.5 62L413 65C416 61.5 419.5 60.5 422.5 61.5C427 63 428.5 67 427.5 70.5C426.5 74 423.5 76 420 76.5L419.5 74C422 73.5 423 72 423 70C423 67.5 421 66 419 66.5C417.5 67 416.5 68 416 69L419 71.5Z" fill="url(#gr)" stroke="#a06050" stroke-width="0.8"/>
<rect x="324.5" y="168.5" width="9" height="8" fill="#d8d8d8" stroke="#b4b4b4" stroke-width="1"/>
<circle cx="329" cy="172.5" r="2.3" fill="#e4e4e4" stroke="#b4b4b4" stroke-width="0.9"/>
<path transform="translate(327.5 173.6) scale(0.52 0.49) translate(-442 -61)" d="M463 73.5L460.5 62L458 65C455 61.5 451.5 60.5 448.5 61.5C444 63 442.5 67 443.5 70.5C444.5 74 447.5 76 451 76.5L451.5 74C449 73.5 448 72 448 70C448 67.5 450 66 452 66.5C453.5 67 454.5 68 455 69L452 71.5Z" fill="#d0d0d0" stroke="#b0b0b0" stroke-width="1.2"/>
<rect x="360.5" y="169.5" width="11" height="10.5" fill="#dff0d8" stroke="#9ab090" stroke-width="1"/>
<rect x="360.5" y="169.5" width="11" height="2" fill="#8cb4e0"/>
<path d="M361 174h10 M361 177h10 M363.5 172v8" stroke="#90d070" stroke-width="1"/>
<path d="M396 169.3h3" stroke="#707060" stroke-width="1.2"/>
<rect x="394.5" y="169.5" width="12" height="9" fill="#d6d6c8" stroke="#707060" stroke-width="1"/>
<circle cx="399.6" cy="174" r="2.8" fill="#c8c8c0" stroke="#6a6a60" stroke-width="1.6"/>
<circle cx="403.6" cy="177.2" r="4.2" fill="#5cc040"/>
<circle cx="403.6" cy="177.2" r="2" fill="#5cc040" stroke="#e8ffe0" stroke-width="1"/>
<circle cx="403.6" cy="177.2" r="0.8" fill="#2a8a20"/>
<linearGradient id="gbook" x1="0" y1="0" x2="1" y2="1"><stop offset="0" stop-color="#f0e4b8"/><stop offset="1" stop-color="#b8ae88"/></linearGradient>
<path d="M430 172.5L439.5 169L443 178.5L433.5 181.8Z" fill="url(#gbook)" stroke="#8a8468" stroke-width="0.8" stroke-linejoin="round"/>
<path d="M431.5 172.5L433.5 180" stroke="#f4f0dc" stroke-width="1"/>
<path d="M433.5 175L436.5 179L440 174.5" fill="none" stroke="#6a6450" stroke-width="0.9"/>
<path d="M434.6 168.4L436.4 176.5" stroke="#70c858" stroke-width="2"/>
<!-- scroll arrows -->
<path d="M257.8 219.5L261.5 214.5L265.2 219.5Z" fill="#000"/>
<path d="M258 550L261.5 555L265 550Z" fill="#000"/>
<path d="M18 564L14 567.5L18 571Z" fill="#000"/>
<path d="M245 564L249 567.5L245 571Z" fill="#000"/>
</svg>
</body></html>
